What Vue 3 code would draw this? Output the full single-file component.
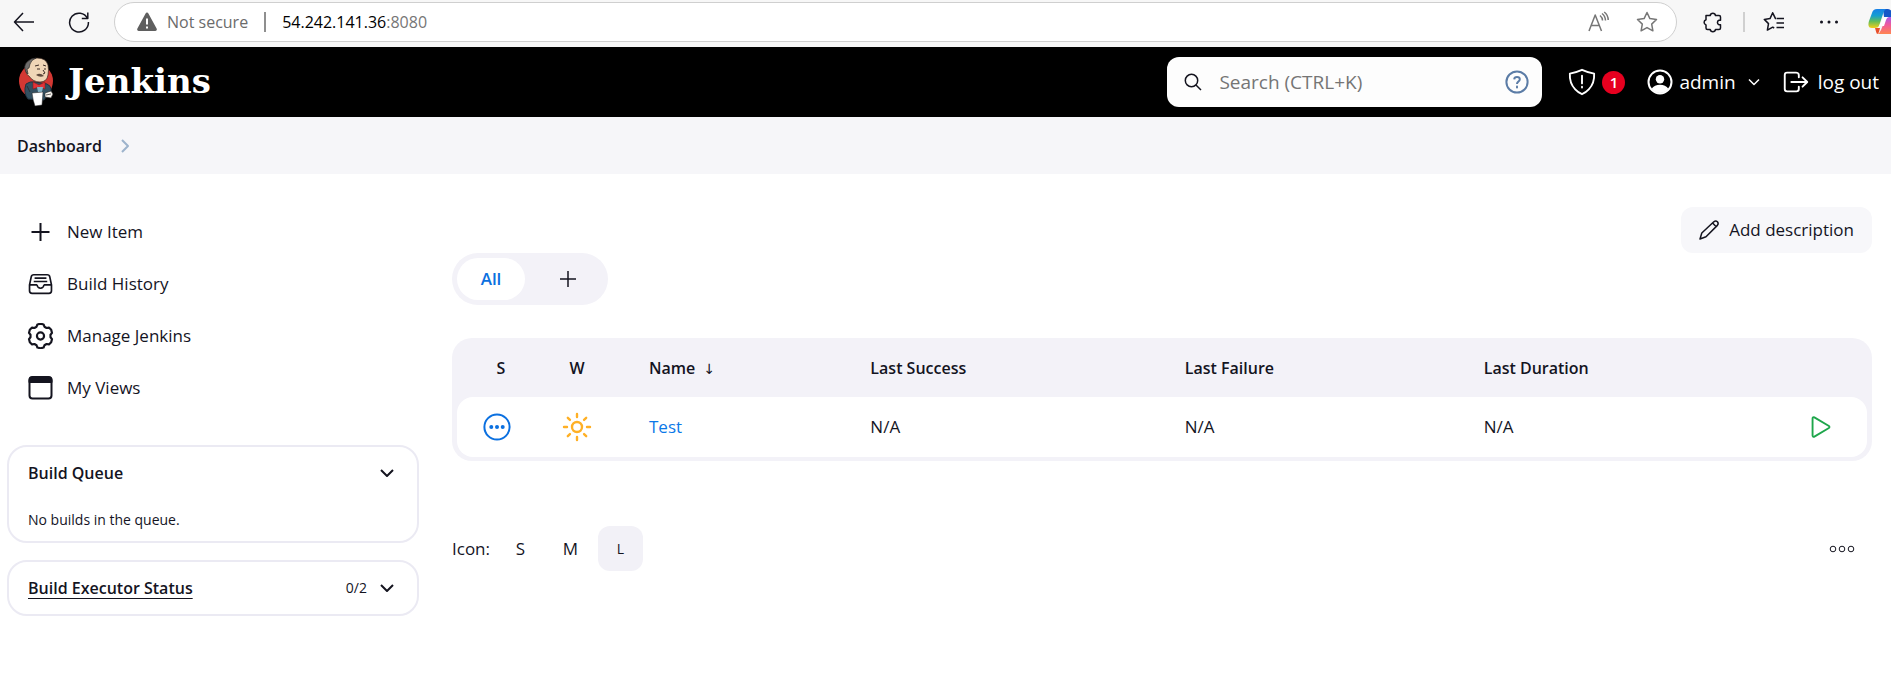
<script setup>
import { ref } from 'vue'

const query = ref('')

const columns = [
  { key: 'success', label: 'Last Success' },
  { key: 'failure', label: 'Last Failure' },
  { key: 'duration', label: 'Last Duration' },
]
const jobs = [{ name: 'Test', success: 'N/A', failure: 'N/A', duration: 'N/A' }]

// Outline of a six-tooth gear centred in a 24x24 box
const gearPath = (() => {
  const points = []
  for (let tooth = 0; tooth < 6; tooth++) {
    for (const [offset, radius] of [[-23, 9.3], [-15, 11], [0, 11.4], [15, 11], [23, 9.3]]) {
      const angle = ((tooth * 60 - 90 + offset) * Math.PI) / 180
      points.push(`${(12 + radius * Math.cos(angle)).toFixed(2)} ${(12 + radius * Math.sin(angle)).toFixed(2)}`)
    }
  }
  return `M${points.join('L')}Z`
})()
</script>

<template>
  <div class="page">
    <div class="chrome">
      <button class="tool back" aria-label="Back">
        <svg width="22" height="22" viewBox="0 0 22 22"><path d="M21 11H2M10 2L1.5 11l8.5 9" /></svg>
      </button>
      <button class="tool reload" aria-label="Refresh">
        <svg width="22" height="22" viewBox="0 0 22 22"><path d="M19.5 7.5A9.4 9.4 0 1 0 20.4 11M19.8 1.5v6h-6" /></svg>
      </button>
      <div class="address">
        <svg width="20" height="20" viewBox="0 0 20 20">
          <path d="M8.6 1.4a1.6 1.6 0 0 1 2.8 0l8.2 15.2a1.6 1.6 0 0 1-1.4 2.4H1.8a1.6 1.6 0 0 1-1.4-2.4z" fill="#5f5f5f" />
          <path d="M10 6.5v6M10 14.6v2" stroke="#fff" stroke-width="2" />
        </svg>
        <span class="insecure">Not secure</span>
        <span class="bar"></span>
        <span class="url">54.242.141.36<span class="port">:8080</span></span>
        <button class="tool grey read" aria-label="Read aloud">
          <svg width="22" height="22" viewBox="0 0 22 22">
            <path d="M2 20L8.2 4 14.500 20M4.200 14.500h8M13 4.500q2.500 2 2.500 5M15 2.500q3.300 2.500 3.500 7M17.200 1q4 3 4 8" />
          </svg>
        </button>
        <button class="tool grey" aria-label="Add to favorites">
          <svg width="22" height="22" viewBox="0 0 22 22">
            <path d="M11 1.500l2.900 6.100 6.600.9-4.800 4.600 1.200 6.700L11 16.600l-5.900 3.200 1.200-6.700L1.500 8.500l6.600-.9z" />
          </svg>
        </button>
      </div>
      <div class="extras">
        <button class="tool" aria-label="Extensions">
          <svg width="22" height="22" viewBox="0 0 22 22">
            <path d="M4 4.500h4.200a2.700 2.700 0 0 1 5.300 0h3.500q1.500 0 1.500 1.500v3.200h-1.500a2.400 2.400 0 0 0 0 4.500h1.500V17q0 1.500-1.500 1.500h-3.500a2.700 2.700 0 0 1-5.300 0H5.500Q4 18.500 4 17v-3a2.800 2.800 0 0 1 0-5.300z" />
          </svg>
        </button>
        <span class="divider"></span>
        <button class="tool" aria-label="Favorites">
          <svg width="22" height="22" viewBox="0 0 22 22">
            <path d="M13.500 7.600h-1L9.700 1.800 7 7.600l-5.700.8 4.200 4.200-1.100 6.500 5.300-2.900 1.500.8M14 7.600h7M13.500 12h7.500M13.500 16.500h7.500" />
          </svg>
        </button>
        <button class="tool more" aria-label="Settings and more">
          <svg width="22" height="22" viewBox="0 0 22 22"><path class="dot" d="M3.500 11h.01M11 11h.01M18.500 11h.01" /></svg>
        </button>
        <button class="tool copilot" aria-label="Copilot">
          <svg width="30" height="26" viewBox="0 0 30 26">
            <defs>
              <linearGradient id="cool" x1="0" y1="0" x2="0" y2="1">
                <stop offset="0" stop-color="#1780e8" /><stop offset=".35" stop-color="#159ed0" />
                <stop offset=".65" stop-color="#62bd5a" /><stop offset="1" stop-color="#f4cf19" />
              </linearGradient>
              <linearGradient id="warm" x1="0" y1="0" x2="0" y2="1">
                <stop offset="0" stop-color="#a65af0" /><stop offset=".45" stop-color="#ef5a9c" /><stop offset="1" stop-color="#ff8550" />
              </linearGradient>
            </defs>
            <path d="M15 0h5q3 0 4 4l1 4h-9z" fill="#1557c8" />
            <path d="M9 0h9q-2 1-3 5l-4 12q-1 2-4 2H4q-5 0-3-7L4 4q1-4 5-4z" fill="url(#cool)" />
            <path d="M20 8h6q4 0 3 6l-2 7q-1 4-5 4H9q3-1 4-4l4-10q1-3 3-3z" fill="url(#warm)" />
            <path d="M16 8h5q-2 0-3 3l-2 6h-5z" fill="#fff" />
            <path d="M7 19h5l-1 4q-1 2-2 2-1-2-2-6z" fill="#e8502c" />
          </svg>
        </button>
      </div>
    </div>

    <header class="header">
      <a class="brand" href="#">
        <svg width="36" height="50" viewBox="0 0 36 50">
          <ellipse cx="18" cy="24" rx="17" ry="17.500" fill="#d33833" />
          <path d="M8 27q4-3 9-2l12 2q4 2 4 5v6l-5 2-2 3-16-1q-5-6-2-15z" fill="#335061" stroke="#20333f" />
          <path d="M8 11Q9 2 19 1q9 0 11 7 1 5 0 10-1 7-8 7-7 0-11-6-4-2-3-8z" fill="#f0d6b7" stroke="#3b2b25" stroke-width=".7" />
          <path d="M8 15Q5 9 9 5q4-4 9-4-5 2-6 6l-1 4-2 1 1 5z" fill="#6f6d6c" stroke="#2d2b2a" stroke-width=".7" />
          <path d="M17 9l4-1M25 8l3 1M19 12h3M26 12h2M25 13l2 3-2 1" fill="none" stroke="#3b2b25" />
          <path d="M18 18q4-3 8 1-4 2-8-1z" fill="#5f4a3e" />
          <path d="M15 25l6 3 6-3v7l-6-2-6 2z" fill="#e03338" stroke="#811" stroke-width=".5" />
          <path d="M19 30h6l-1 5h-4z" fill="#81b0c4" />
          <path d="M14 36l11-1-1 13-7 1q-2-5-3-13z" fill="#fff" stroke="#222" stroke-width=".5" />
          <path d="M27 36l6-2 2 3-2 4-6-1z" fill="#f7f4ee" stroke="#222" stroke-width=".6" />
          <path d="M28 38l5-1M9 29l3 6" stroke="#222" stroke-width=".7" />
        </svg>
        <span>Jenkins</span>
      </a>
      <div class="search">
        <svg width="18" height="18" viewBox="0 0 18 18"><circle cx="7.500" cy="7.500" r="6.200" /><path d="M12 12l5 5" /></svg>
        <input v-model="query" type="text" aria-label="Search" placeholder="Search (CTRL+K)" />
        <a class="help" href="#" aria-label="Search help">
          <svg width="24" height="24" viewBox="0 0 24 24">
            <circle cx="12" cy="12" r="10.600" /><path d="M9.200 9.300Q9.400 7 12 7q2.700 0 2.800 2.300 0 1.400-1.500 2.300-1.300.9-1.300 2.400" />
            <path d="M12 16.600v1" stroke-linecap="round" />
          </svg>
        </a>
      </div>
      <button class="alert" aria-label="Security warnings">
        <svg width="30" height="30" viewBox="0 0 512 512">
          <path d="M463.100 112.370C373.680 96.330 336.710 84.450 256 48c-80.710 36.450-117.680 48.330-207.100 64.370C32.700 369.130 240.580 457.790 256 464c15.420-6.210 223.300-94.870 207.100-351.630z" />
          <path d="M256 150v130M256 335v15" />
        </svg>
        <span class="badge">1</span>
      </button>
      <a class="user" href="#">
        <svg width="26" height="26" viewBox="0 0 26 26">
          <circle cx="13" cy="13" r="11.500" /><circle class="solid" cx="13" cy="10.200" r="4.200" />
          <path class="solid" d="M4.500 20q3-4.200 8.500-4.200t8.500 4.200q-3.500 4-8.500 4t-8.500-4z" />
        </svg>
        <span>admin</span>
      </a>
      <button class="caret" aria-label="User menu">
        <svg width="14" height="14" viewBox="0 0 14 14"><path d="M2 4.500l5 5 5-5" /></svg>
      </button>
      <a class="logout" href="#">
        <svg width="30" height="30" viewBox="0 0 512 512">
          <path d="M304 336v40a40 40 0 0 1-40 40H104a40 40 0 0 1-40-40V136a40 40 0 0 1 40-40h152c22 0 48 18 48 40v40M368 336l80-80-80-80M176 256h256" />
        </svg>
        <span>log out</span>
      </a>
    </header>

    <nav class="crumbs" aria-label="Breadcrumb">
      <a href="#">Dashboard</a>
      <svg width="10" height="16" viewBox="0 0 10 16"><path d="M2 2l6 6-6 6" /></svg>
    </nav>

    <div class="body">
      <aside class="side">
        <nav class="tasks">
          <a href="#">
            <svg width="26" height="26" viewBox="0 0 26 26"><path d="M13 4v18M4 13h18" /></svg>
            <span>New Item</span>
          </a>
          <a href="#">
            <svg class="wide" width="28" height="28" viewBox="0 0 512 512">
              <path d="M384 80H128c-26 0-43 14-48 40L48 272v112a48 48 0 0 0 48 48h320a48 48 0 0 0 48-48V272l-32-152c-5-27-23-40-48-40zM48 272h144M320 272h144M192 272a64 64 0 0 0 128 0M144 144h224M128 208h256" />
            </svg>
            <span>Build History</span>
          </a>
          <a href="#">
            <svg width="26" height="26" viewBox="0 0 24 24"><path :d="gearPath" /><circle cx="12" cy="12" r="3.300" /></svg>
            <span>Manage Jenkins</span>
          </a>
          <a href="#">
            <svg width="26" height="26" viewBox="0 0 26 26">
              <rect x="2" y="2.500" width="22" height="21" rx="3" /><path class="solid" d="M2 7V5q0-3 3-3h16q3 0 3 3v2z" />
            </svg>
            <span>My Views</span>
          </a>
        </nav>
        <section class="pane">
          <div class="pane-head">
            <h2>Build Queue</h2>
            <button aria-label="Toggle build queue"><svg width="16" height="16" viewBox="0 0 16 16"><path d="M2 5l6 6 6-6" /></svg></button>
          </div>
          <p>No builds in the queue.</p>
        </section>
        <section class="pane">
          <div class="pane-head">
            <h2><a href="#">Build Executor Status</a></h2>
            <span class="count">0/2</span>
            <button aria-label="Toggle executor status"><svg width="16" height="16" viewBox="0 0 16 16"><path d="M2 5l6 6 6-6" /></svg></button>
          </div>
        </section>
      </aside>

      <main class="main">
        <div class="actions">
          <a class="describe" href="#">
            <svg width="22" height="22" viewBox="0 0 22 22">
              <path d="M2 20l1.800-6L15.800 2.800q2-1.500 3.600 0 1.500 1.700 0 3.600L8 17.800zM14.600 4l3.600 3.700" />
            </svg>
            <span>Add description</span>
          </a>
        </div>
        <div class="tabs">
          <a class="tab active" href="#">All</a>
          <a class="tab" href="#" aria-label="New view"><svg width="18" height="18" viewBox="0 0 18 18"><path d="M9 1v16M1 9h16" /></svg></a>
        </div>

        <div class="jobs">
          <table>
            <colgroup>
              <col class="c-icon" /><col class="c-icon" /><col class="c-name" /><col class="c-success" /><col class="c-failure" /><col /><col class="c-run" />
            </colgroup>
            <thead>
              <tr>
                <th class="mid status">S</th>
                <th class="mid">W</th>
                <th>Name <span class="sort">↓</span></th>
                <th v-for="column in columns" :key="column.key">{{ column.label }}</th>
                <th></th>
              </tr>
            </thead>
            <tbody>
              <tr v-for="job in jobs" :key="job.name">
                <td class="mid">
                  <svg class="pending" width="28" height="28" viewBox="0 0 28 28">
                    <circle cx="14" cy="14" r="12.600" /><path d="M8.300 14h.01M14 14h.01M19.700 14h.01" />
                  </svg>
                </td>
                <td class="mid">
                  <svg class="sun" width="32" height="32" viewBox="0 0 512 512">
                    <circle cx="256" cy="256" r="80" />
                    <path d="M256 48v48M256 416v48M403 109l-34 34M143 369l-34 34M464 256h-48M96 256H48M403 403l-34-34M143 143l-34-34" />
                  </svg>
                </td>
                <td><a class="job" href="#">{{ job.name }}</a></td>
                <td v-for="column in columns" :key="column.key">{{ job[column.key] }}</td>
                <td>
                  <button class="run" aria-label="Schedule a build">
                    <svg width="30" height="30" viewBox="0 0 512 512">
                      <path d="M112 111v290c0 17 17 28 31 20l248-148c12-7 12-26 0-34L143 91c-14-8-31 3-31 20z" />
                    </svg>
                  </button>
                </td>
              </tr>
            </tbody>
          </table>
        </div>

        <div class="footer">
          <span class="label">Icon:</span>
          <button>S</button>
          <button>M</button>
          <button class="on">L</button>
          <button class="options" aria-label="More options">
            <svg width="26" height="10" viewBox="0 0 26 10"><circle cx="4" cy="5" r="2.800" /><circle cx="13" cy="5" r="2.800" /><circle cx="22" cy="5" r="2.800" /></svg>
          </button>
        </div>
      </main>
    </div>
  </div>
</template>

<style>
body {
  margin: 0;
  background: #fff;
  overflow-x: hidden;
}
</style>

<style scoped>
.page {
  font-family: "Open Sans", "Noto Sans", sans-serif;
  font-size: 17px;
  line-height: 24px;
  color: #14141f;
}
.page * {
  box-sizing: border-box;
}
a {
  color: inherit;
  text-decoration: none;
}
button {
  padding: 0;
  border: 0;
  background: none;
  color: inherit;
  font: inherit;
  cursor: pointer;
}
svg {
  display: block;
  flex: none;
  fill: none;
  stroke: currentColor;
  stroke-linejoin: round;
}
svg .solid {
  fill: currentColor;
}

.chrome {
  display: flex;
  align-items: center;
  height: 47px;
  padding: 0 0 3px 13px;
  overflow: hidden;
  background: #f7f7f7;
}
.tool svg {
  stroke-width: 1.5;
}
.tool .dot {
  stroke-width: 3;
  stroke-linecap: round;
}
.reload {
  margin: 0 24px 0 33px;
}
.address {
  display: flex;
  flex: 1;
  align-items: center;
  height: 40px;
  padding: 0 18px 0 22px;
  border: 1px solid #cfcfcf;
  border-radius: 20px;
  background: #fff;
  font-size: 16px;
}
.address > svg,
.copilot svg {
  stroke: none;
}
.insecure {
  margin-left: 10px;
  color: #6b6b6b;
}
.bar {
  width: 2px;
  height: 20px;
  margin: 0 16px;
  background: #8f8f8f;
}
.url {
  flex: 1;
  color: #000;
}
.port {
  color: #767676;
}
.grey {
  color: #767676;
}
.read {
  margin-right: 27px;
}
.extras {
  display: flex;
  align-items: center;
  width: 214px;
  padding-left: 25px;
}
.divider {
  flex: none;
  width: 2px;
  height: 20px;
  margin: 0 18px 0 19px;
  background: #d0d0d0;
}
.more {
  margin: 0 28px 0 33px;
}

.header {
  display: flex;
  align-items: center;
  height: 70px;
  padding: 0 12px 0 18px;
  background: #000;
  color: #fff;
  font-size: 19px;
}
.brand {
  display: flex;
  align-items: center;
  gap: 14px;
  margin-right: auto;
  font-family: "DejaVu Serif", serif;
  font-size: 34px;
  font-weight: bold;
  line-height: 44px;
}
.brand svg {
  stroke: none;
}
.brand span {
  padding-bottom: 3px;
}
.search {
  display: flex;
  align-items: center;
  width: 375px;
  height: 50px;
  padding: 0 13px 0 17px;
  border-radius: 12px;
  background: #fdfdfd;
  color: #14141f;
}
.search svg {
  stroke-width: 1.5;
}
.search input {
  flex: 1;
  min-width: 0;
  height: 40px;
  margin-left: 17px;
  padding: 0;
  border: 0;
  outline: 0;
  background: none;
  color: inherit;
  font: inherit;
}
.search input::placeholder {
  color: #757575;
  opacity: 1;
}
.search .help {
  color: #5b7ca6;
}
.help svg {
  stroke-width: 2;
}
.alert {
  display: flex;
  align-items: center;
  gap: 5px;
  margin-left: 25px;
}
.alert svg,
.logout svg {
  stroke-width: 32;
  stroke-linecap: round;
}
.badge {
  width: 23px;
  height: 23px;
  border-radius: 50%;
  background: #e6001f;
  font-size: 15px;
  font-weight: 600;
  line-height: 23px;
}
.user {
  display: flex;
  align-items: center;
  gap: 6px;
  margin-left: 22px;
}
.user svg {
  stroke-width: 2;
}
.user .solid {
  stroke: none;
}
.caret {
  margin: 0 20px 0 11px;
}
.caret svg {
  stroke-width: 1.5;
}
.logout {
  display: flex;
  align-items: center;
  gap: 7px;
}

.crumbs {
  display: flex;
  align-items: center;
  gap: 18px;
  height: 57px;
  padding: 0 17px;
  background: #f6f6f9;
  font-weight: 600;
}
.crumbs a {
  font-size: 16px;
}
.crumbs svg {
  color: #9db3cc;
  stroke-width: 2;
}

.body {
  display: flex;
  gap: 33px;
  padding: 32px 19px 0 7px;
}
.side {
  flex: none;
  width: 412px;
}
.tasks {
  margin-bottom: 31px;
}
.tasks a {
  display: flex;
  align-items: center;
  gap: 13px;
  height: 52px;
  padding-left: 20px;
}
.tasks svg {
  width: 27px;
  stroke-width: 2;
}
.tasks .wide {
  stroke-width: 32;
}
.pane {
  margin-bottom: 17px;
  padding: 0 19px;
  border: 2px solid #ebeaf3;
  border-radius: 20px;
}
.pane-head {
  display: flex;
  align-items: center;
  height: 52px;
}
.pane h2 {
  flex: 1;
  margin: 0;
  font-size: 16px;
  font-weight: 600;
}
.pane h2 a {
  text-decoration: underline;
  text-decoration-thickness: 1px;
  text-underline-offset: 4px;
}
.pane button {
  margin-right: 3px;
}
.pane svg {
  stroke-width: 2;
}
.pane p {
  margin: 9px 0;
  font-size: 14px;
}
.count {
  margin-right: 12px;
  font-size: 14px;
}

.main {
  flex: 1;
  min-width: 0;
  padding-top: 1px;
}
.actions {
  display: flex;
  justify-content: flex-end;
}
.describe {
  display: flex;
  align-items: center;
  gap: 9px;
  height: 46px;
  padding: 0 18px 0 17px;
  border-radius: 12px;
  background: #f7f7fa;
}
.describe svg {
  stroke-width: 1.5;
}
.tabs {
  display: flex;
  gap: 8px;
  width: fit-content;
  padding: 5px;
  border-radius: 26px;
  background: #f3f2f8;
}
.tab {
  display: flex;
  align-items: center;
  justify-content: center;
  width: 70px;
  height: 42px;
  border-radius: 21px;
  font-weight: 600;
}
.tab svg {
  stroke-width: 1.5;
}
.tab.active {
  width: 68px;
  background: #fff;
  color: #0b70e0;
}
.jobs {
  margin-top: 33px;
  padding: 0 5px 4px;
  border-radius: 20px;
  background: #f3f2f8;
}
table {
  width: 100%;
  border-spacing: 0;
  table-layout: fixed;
}
.c-icon {
  width: 80px;
}
.c-name {
  width: 15.7%;
}
.c-success {
  width: 22.3%;
}
.c-failure {
  width: 21.2%;
}
.c-run {
  width: 100px;
}
th,
td {
  padding: 0 0 0 32px;
  text-align: left;
}
th {
  height: 59px;
  font-size: 16px;
  font-weight: 600;
}
td {
  height: 60px;
  background: #fff;
}
td:first-child {
  border-radius: 16px 0 0 16px;
}
td:last-child {
  border-radius: 0 16px 16px 0;
}
.mid {
  padding: 0;
  text-align: center;
}
.status {
  padding-left: 8px;
}
.mid svg {
  margin: 0 auto;
}
.sort {
  margin-left: 4px;
  font-family: "DejaVu Sans", sans-serif;
  font-size: 14px;
  font-weight: 400;
  line-height: 14px;
}
.pending {
  color: #0b70e0;
  stroke-width: 2;
}
.pending path {
  stroke-width: 4;
  stroke-linecap: round;
}
.sun {
  color: #ffb025;
  stroke-width: 38;
  stroke-linecap: round;
}
.job {
  color: #0b78e8;
}
.run {
  display: block;
  margin-left: 7px;
  color: #1ea64b;
}
.run svg {
  stroke-width: 32;
}

.footer {
  display: flex;
  align-items: center;
  gap: 5px;
  margin-top: 65px;
}
.footer .label {
  margin-right: 3px;
}
.footer button {
  width: 45px;
  height: 45px;
  border-radius: 12px;
}
.footer .on {
  background: #f2f1f7;
  font-size: 14px;
}
.footer .options {
  margin: 0 8px 0 auto;
}
.options svg {
  margin: 0 auto;
}
</style>
